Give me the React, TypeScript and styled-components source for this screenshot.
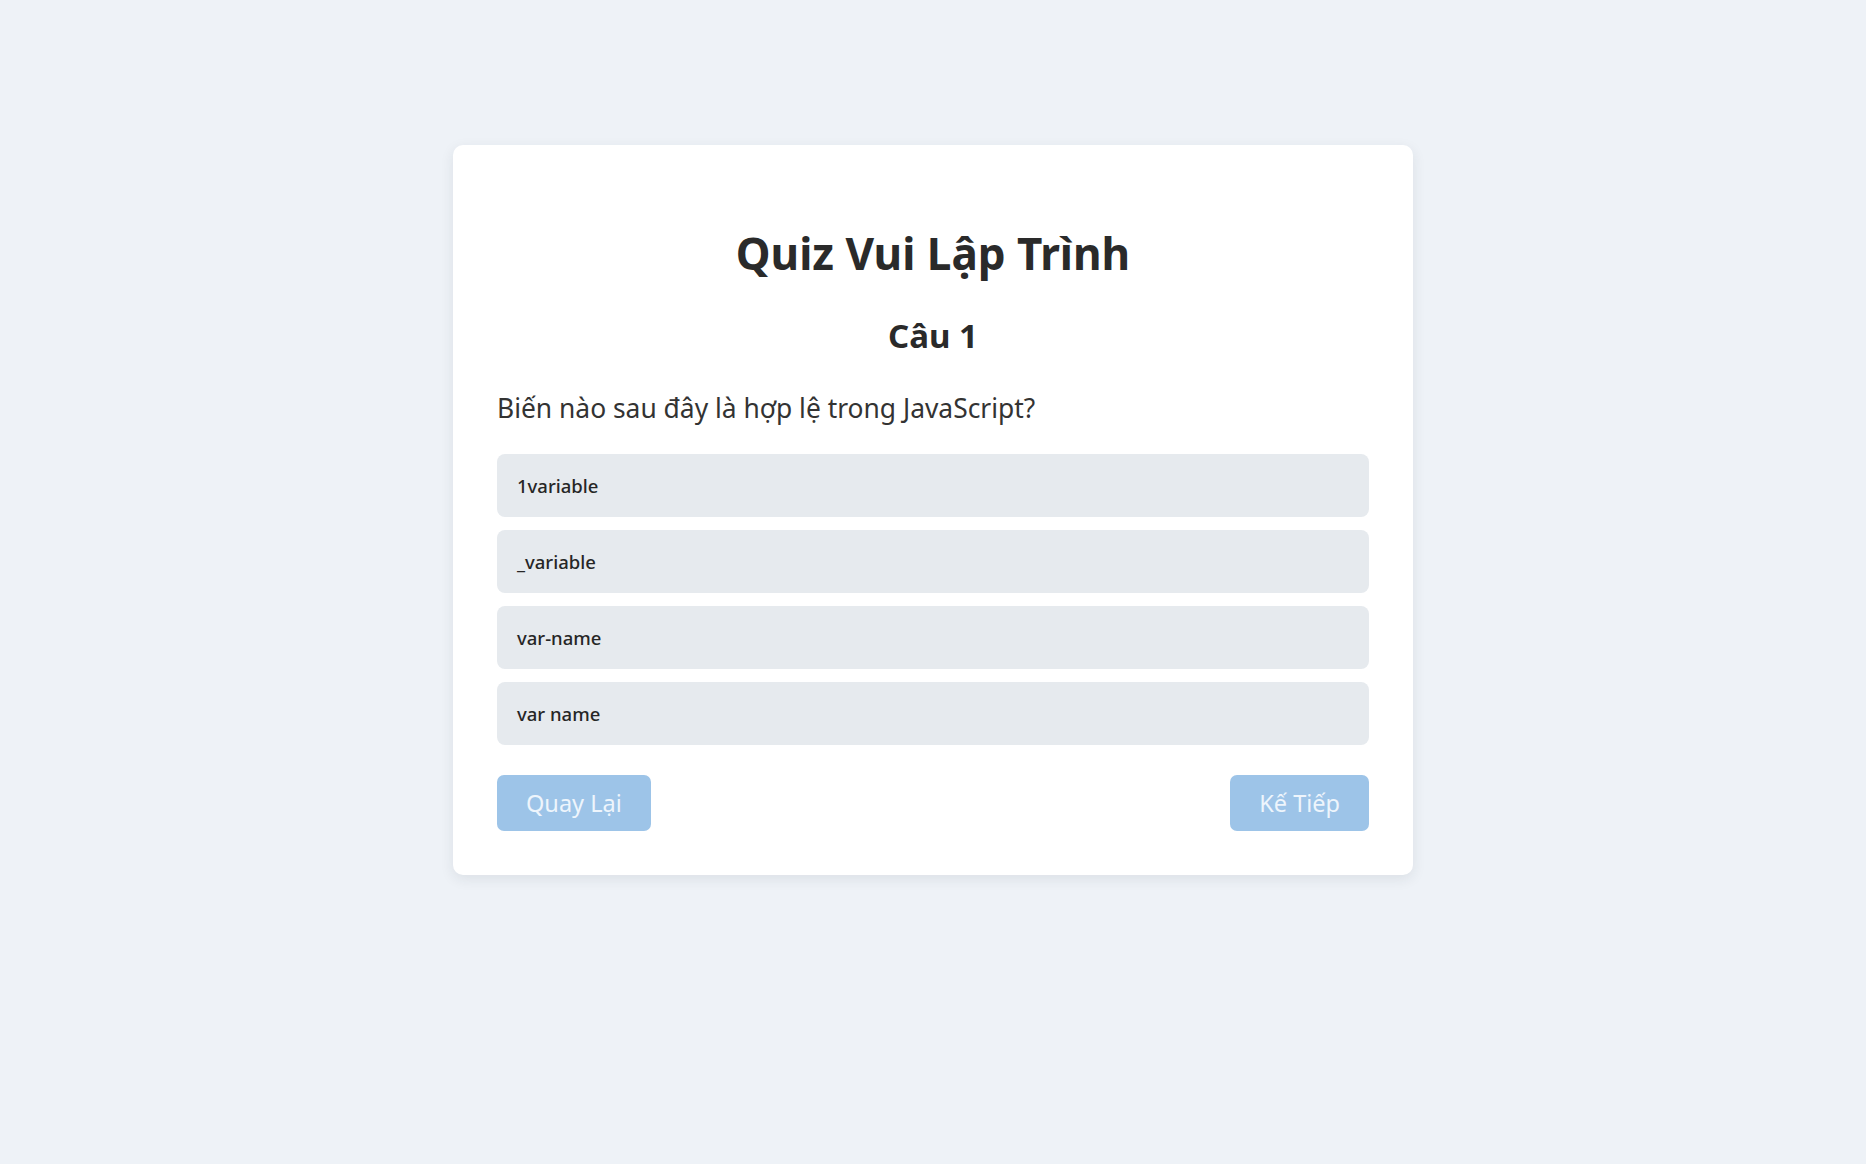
import React, { useState } from "react";
import styled, { createGlobalStyle } from "styled-components";

const GlobalStyle = createGlobalStyle`
  html, body {
    margin: 0;
    padding: 0;
    background: #eef2f7;
  }
  body {
    font-family: "Noto Sans", "Open Sans", Arial, sans-serif;
    color: #333;
  }
  * { box-sizing: border-box; }
`;

const Page = styled.main`
  min-height: 100vh;
  display: flex;
  justify-content: center;
  align-items: flex-start;
  padding-top: 145px;
`;

const Card = styled.section`
  width: 960px;
  background: #ffffff;
  border-radius: 10px;
  box-shadow: 0 4px 14px rgba(30, 40, 60, 0.09);
  padding: 44px;
  display: flex;
  flex-direction: column;
`;

const Title = styled.h1`
  margin: 38px 0 0;
  font-size: 44px;
  line-height: 1.2;
  font-weight: 700;
  text-align: center;
  color: #2a2a2a;
`;

const QuestionNumber = styled.h2`
  margin: 36px 0 0;
  font-size: 33px;
  line-height: 1.2;
  font-weight: 700;
  text-align: center;
  color: #2a2a2a;
`;

const QuestionText = styled.p`
  margin: 34px 0 0;
  font-size: 26.4px;
  line-height: 1.5;
  color: #333;
`;

const OptionList = styled.div`
  margin-top: 25px;
  display: flex;
  flex-direction: column;
  gap: 13px;
`;

const Option = styled.button<{ $selected?: boolean }>`
  height: 63px;
  width: 100%;
  border: none;
  border-radius: 8px;
  padding: 0 20px;
  text-align: left;
  font-family: "Noto Sans", "Open Sans", Arial, sans-serif;
  font-size: 18.5px;
  font-weight: 500;
  color: #262626;
  background: ${(p) => (p.$selected ? "#cfe2f6" : "#e6eaee")};
  cursor: pointer;
`;

const Controls = styled.div`
  margin-top: 30px;
  display: flex;
  justify-content: space-between;
  align-items: center;
`;

const NavButton = styled.button`
  height: 56px;
  padding: 0 29px;
  border: none;
  border-radius: 7px;
  background: #9dc4e8;
  color: #eef5fc;
  font-family: "Noto Sans", "Open Sans", Arial, sans-serif;
  font-size: 23.5px;
  cursor: not-allowed;
`;

const options = ["1variable", "_variable", "var-name", "var name"];

export default function App() {
  const [selected, setSelected] = useState<number | null>(null);

  return (
    <>
      <GlobalStyle />
      <Page>
        <Card>
          <Title>Quiz Vui Lập Trình</Title>
          <QuestionNumber>Câu 1</QuestionNumber>
          <QuestionText>Biến nào sau đây là hợp lệ trong JavaScript?</QuestionText>
          <OptionList>
            {options.map((opt, i) => (
              <Option
                key={opt}
                $selected={selected === i}
                onClick={() => setSelected(i)}
              >
                {opt}
              </Option>
            ))}
          </OptionList>
          <Controls>
            <NavButton disabled>Quay Lại</NavButton>
            <NavButton disabled={selected === null}>Kế Tiếp</NavButton>
          </Controls>
        </Card>
      </Page>
    </>
  );
}
